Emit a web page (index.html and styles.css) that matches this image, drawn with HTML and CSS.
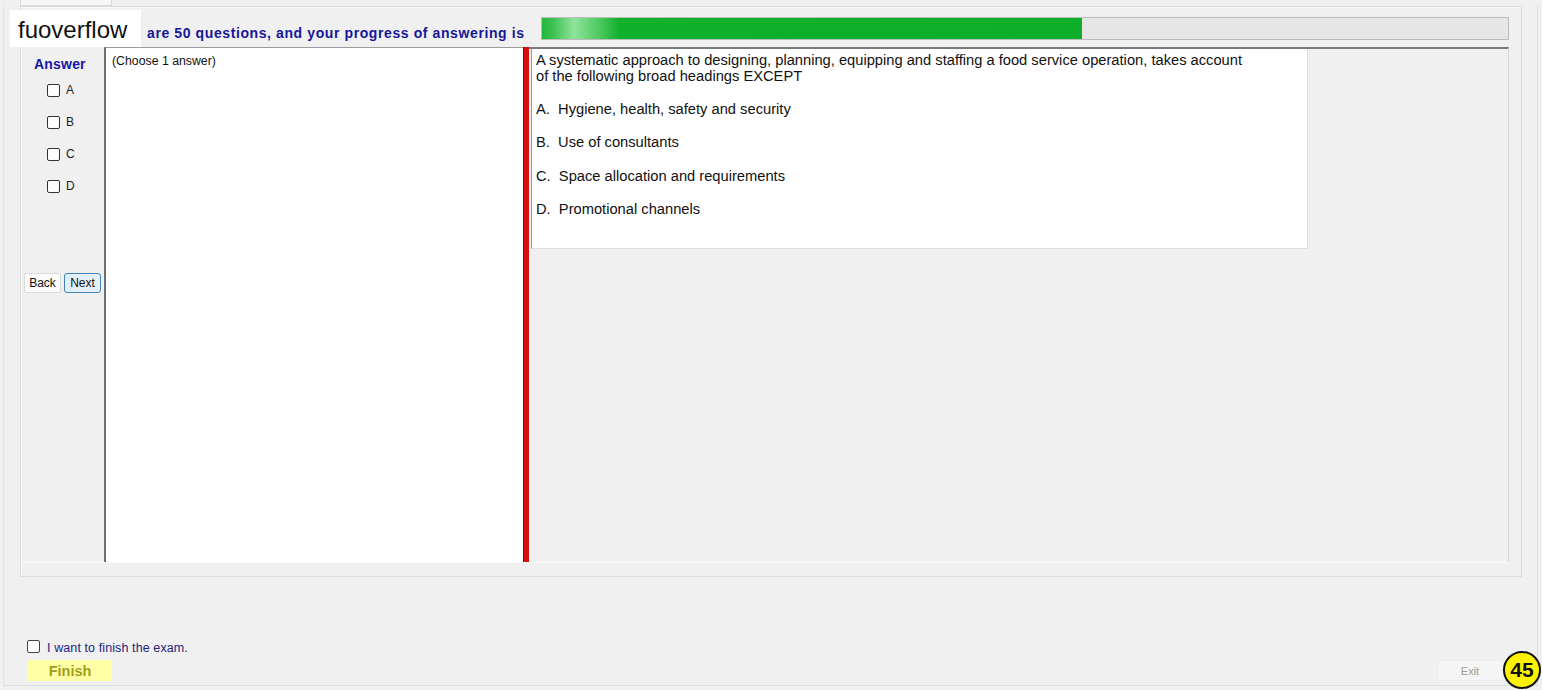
FILE: index.html
```html
<!DOCTYPE html>
<html lang="en">
<head>
    <meta charset="UTF-8">
    <meta name="viewport" content="width=device-width, initial-scale=1.0">
    <title>Exam</title>
    <link rel="stylesheet" href="styles.css">
</head>
<body>

<div class="tabs"><div class="tab"></div></div>

<div class="tabpage">
    <div class="group">
        <!-- HEADER: question count and progress -->
        <div class="header">
            <span class="title">are 50 questions, and your progress of answering is</span>
            <div class="progress"><div class="progress-fill" style="width: 540px"></div></div>
        </div>

        <div class="main">
            <!-- ANSWER COLUMN -->
            <div class="answer-col">
                <div class="answer-title">Answer</div>
                <label class="opt"><span class="box"></span>A</label>
                <label class="opt"><span class="box"></span>B</label>
                <label class="opt"><span class="box"></span>C</label>
                <label class="opt"><span class="box"></span>D</label>
                <div class="nav">
                    <button class="nav-btn">Back</button>
                    <button class="nav-btn next">Next</button>
                </div>
            </div>

            <div class="choose">(Choose 1 answer)</div>
            <div class="splitter"></div>

            <!-- QUESTION -->
            <div class="question-area">
                <div class="question">
                    <p>A systematic approach to designing, planning, equipping and staffing a food service operation, takes account<br>of the following broad headings EXCEPT</p>
                    <p class="choice">A.  Hygiene, health, safety and security</p>
                    <p class="choice">B.  Use of consultants</p>
                    <p class="choice">C.  Space allocation and requirements</p>
                    <p class="choice">D.  Promotional channels</p>
                </div>
            </div>
        </div>
    </div>

    <!-- FOOTER -->
    <div class="footer">
        <label class="finish-check"><span class="box"></span><span class="finish-text">I want to finish the exam.</span></label>
        <div class="footer-row">
            <button class="finish-btn">Finish</button>
            <button class="exit-btn">Exit</button>
        </div>
    </div>
</div>

<div class="watermark">fuoverflow</div>
<div class="badge">45</div>

</body>
</html>
```

FILE: styles.css
```css
body {
    margin: 0;
    font-family: "Liberation Sans", Arial, sans-serif;
    background-color: #f0f0f0;
    width: 1542px;
    height: 690px;
    overflow: hidden;
    position: relative;
}
.tabs {
    height: 6px;
}
.tab {
    margin-left: 20px;
    width: 90px;
    height: 5px;
    background: #f7f7f7;
    border: 1px solid #d9d9d9;
    border-top: none;
}
.tabpage {
    margin-left: 3px;
    width: 1535px;
    height: 680px;
    box-sizing: border-box;
    border-left: 1px solid #e2e2e2;
    border-right: 1px solid #dedede;
    border-bottom: 1px solid #dedede;
    padding-left: 16px;
}
.group {
    width: 1502px;
    height: 571px;
    box-sizing: border-box;
    border: 1px solid #dcdcdc;
    box-shadow: inset 1px 1px 0 #fafafa;
    padding: 0 12px 0 1px;
}
.header {
    height: 40px;
    display: flex;
    align-items: flex-start;
    padding-left: 125px;
    padding-top: 10px;
    box-sizing: border-box;
}
.title {
    width: 378px;
    flex: none;
    white-space: nowrap;
    padding-top: 8px;
    font-size: 14px;
    letter-spacing: 0.6px;
    line-height: 16px;
    font-weight: bold;
    color: #16169a;
}
.progress {
    margin-left: 16px;
    width: 968px;
    flex: none;
    height: 23px;
    box-sizing: border-box;
    border: 1px solid #bcbcbc;
    background: #e6e6e6;
}
.progress-fill {
    height: 100%;
    background: linear-gradient(to right, #22b83c 0, #3fc354 12px, #8fe49b 32px, #4bc85e 58px, #0eb02c 78px, #0cae2a 100%);
}
.main {
    height: 515px;
    display: flex;
    border-bottom: 1px solid #fafafa;
}
.answer-col {
    width: 82px;
    display: flex;
    flex-direction: column;
    align-items: flex-start;
}
.answer-title {
    margin-top: 9px;
    margin-left: 12px;
    font-size: 14px;
    letter-spacing: 0.2px;
    line-height: 16px;
    font-weight: bold;
    color: #1717a4;
}
.opt {
    height: 32px;
    display: flex;
    align-items: center;
    font-size: 12px;
    color: #222;
    margin-left: 25px;
}
.opt:first-of-type {
    margin-top: 2px;
}
.box {
    width: 11px;
    height: 11px;
    border: 1px solid #333;
    border-radius: 2px;
    background: #fff;
    margin-right: 6px;
}
.nav {
    margin-top: 71px;
    display: flex;
    gap: 3px;
    margin-left: 2px;
}
.nav-btn {
    width: 37px;
    height: 20px;
    padding: 0;
    font-family: "Liberation Sans", Arial, sans-serif;
    font-size: 12px;
    color: #111;
    background: #fcfcfc;
    border: 1px solid #dadada;
    border-radius: 2px;
}
.nav-btn.next {
    background: #e3f0fb;
    border-color: #3f84bd;
    border-radius: 3px;
}
.choose {
    width: 419px;
    box-sizing: border-box;
    background: #fff;
    border-left: 2px solid #6f6f6f;
    border-top: 1px solid #9a9a9a;
    padding: 6px 6px;
    font-size: 12.3px;
    line-height: 14px;
    color: #111;
}
.splitter {
    width: 6px;
    background: #d70f0f;
    border-left: 1px solid #a00000;
    box-sizing: border-box;
}
.question-area {
    flex: 1;
    border-top: 2px solid #7a7a7a;
    border-right: 1px solid #d6d6d6;
    padding-left: 2px;
}
.question {
    width: 777px;
    height: 200px;
    box-sizing: border-box;
    background: #fff;
    border-left: 1px solid #9a9a9a;
    border-right: 1px solid #e0e0e0;
    border-bottom: 1px solid #e0e0e0;
    padding: 3px 4px;
    font-size: 14.7px;
    line-height: 16px;
    color: #111;
}
.question p {
    margin: 0;
}
.question .choice {
    margin-top: 17.2px;
    white-space: pre;
}
.footer {
    padding-top: 62px;
    margin-left: 7px;
    margin-right: 34px;
}
.finish-check {
    display: flex;
    align-items: center;
    height: 14px;
    font-size: 12.5px;
    letter-spacing: 0.1px;
    color: #23237e;
}
.finish-text {
    padding-top: 4px;
}
.finish-check .box {
    margin-right: 7px;
    border-color: #444;
}
.footer-row {
    margin-top: 7px;
    display: flex;
    justify-content: space-between;
    padding-left: 1px;
}
.finish-btn {
    width: 84px;
    height: 21px;
    padding: 0;
    border: none;
    background: #ffffa6;
    color: #a0a018;
    font-family: "Liberation Sans", Arial, sans-serif;
    font-size: 14.5px;
    font-weight: bold;
}
.exit-btn {
    width: 66px;
    height: 21px;
    padding: 0;
    border: 1px solid #ececec;
    background: #f5f5f5;
    color: #9c9c9c;
    font-family: "Liberation Sans", Arial, sans-serif;
    font-size: 11px;
}
.watermark {
    position: absolute;
    left: 10px;
    top: 10px;
    width: 131px;
    height: 37px;
    box-sizing: border-box;
    padding-left: 8px;
    background: #fff;
    font-size: 24px;
    line-height: 40px;
    color: #111;
}
.badge {
    position: absolute;
    left: 1503px;
    top: 651px;
    width: 38px;
    height: 38px;
    box-sizing: border-box;
    border: 2px solid #111;
    border-radius: 50%;
    background: #fff200;
    font-size: 21px;
    font-weight: bold;
    line-height: 34px;
    text-align: center;
    color: #111;
}
```
